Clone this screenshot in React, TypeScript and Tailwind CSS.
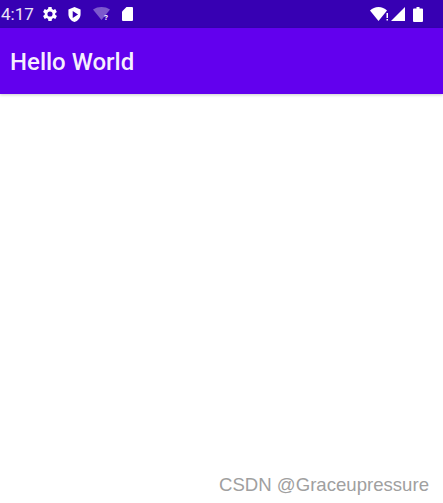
function StatusIcons() {
  return (
    <div className="flex items-center">
      <svg width="14" height="14" viewBox="3.400 3.300 17.200 17.400" className="ml-[9px]" fill="#fff">
        <path d="M18.400 13a7.500 7.500 0 0 0 0-2l2.100-1.600-2-3.500-2.500 1a7.500 7.500 0 0 0-1.700-1L14 3.300h-4l-.4 2.600a7.500 7.500 0 0 0-1.700 1l-2.500-1-2 3.500L5.500 11a7.500 7.500 0 0 0 0 2l-2.100 1.600 2 3.500 2.500-1a7.500 7.500 0 0 0 1.700 1l.4 2.600h4l.4-2.600a7.500 7.500 0 0 0 1.700-1l2.500 1 2-3.500zM12 15.200a3.200 3.200 0 1 1 0-6.400 3.200 3.200 0 0 1 0 6.400z" />
      </svg>
      <svg width="13" height="15" viewBox="3.500 1.500 17 21" className="ml-[11px]" fill="#fff">
        <path fillRule="evenodd" d="M12 1.500 3.500 5v6.500c0 5 3.600 9.400 8.500 11 4.900-1.600 8.500-6 8.500-11V5zM9.500 7l7.500 5-7.500 5z" />
      </svg>
      <svg width="18" height="14" viewBox="0 0 18 14" className="ml-[12px]">
        <path d="M0 2.500C2.500.8 5.500 0 8.500 0s6 .8 8.500 2.500L8.500 13z" fill="#fff" fillOpacity="0.35" />
        <text x="11" y="13" fontSize="8" fontWeight="700" fill="#fff" fontFamily="Roboto, sans-serif">?</text>
      </svg>
      <svg width="11" height="14" viewBox="0 0 11 14" className="ml-[11px]" fill="#fff">
        <path d="M4.500 0H10a1 1 0 0 1 1 1v12a1 1 0 0 1-1 1H1a1 1 0 0 1-1-1V4.500z" />
      </svg>
    </div>
  );
}

function SystemIcons() {
  return (
    <div className="flex items-center">
      <svg width="19" height="14" viewBox="0 0 19 14" fill="#fff">
        <path d="M0 3.500C2.300 1.300 5.300 0 8.500 0s6.200 1.300 8.500 3.500L8.500 14z" />
        <rect x="16.500" y="6" width="1.500" height="5" />
        <rect x="16.500" y="12" width="1.500" height="1.500" />
      </svg>
      <svg width="14" height="14" viewBox="0 0 14 14" className="ml-[2px]" fill="#fff">
        <path d="M14 0v14H0z" />
      </svg>
      <svg width="10" height="15" viewBox="0 0 10 15" className="ml-[8px]" fill="#fff">
        <path d="M3.500 0h3v1.500H9a1 1 0 0 1 1 1V14a1 1 0 0 1-1 1H1a1 1 0 0 1-1-1V2.500a1 1 0 0 1 1-1h2.500z" />
      </svg>
    </div>
  );
}

export default function App() {
  return (
    <div className="flex h-[503px] w-[443px] flex-col overflow-hidden bg-white font-['Roboto',sans-serif]">
      <div className="flex h-[28px] items-center justify-between bg-[#3700b3] pr-[20px] text-white">
        <div className="flex items-center">
          <span className="pl-[1px] text-[17px] leading-none text-white/90">4:17</span>
          <StatusIcons />
        </div>
        <SystemIcons />
      </div>
      <header className="flex h-[66px] items-center bg-[#6200ee] pl-[10px] pt-[2px] shadow-[0_1px_3px_rgba(0,0,0,0.2)]">
        <h1 className="text-[24px] font-medium leading-none text-white/95">Hello World</h1>
      </header>
      <p className="mt-auto pb-[8px] pr-[14px] text-right font-['Liberation_Sans',sans-serif] text-[18.600px] leading-[21px] text-[#a0a0a0]">
        CSDN @Graceupressure
      </p>
    </div>
  );
}
